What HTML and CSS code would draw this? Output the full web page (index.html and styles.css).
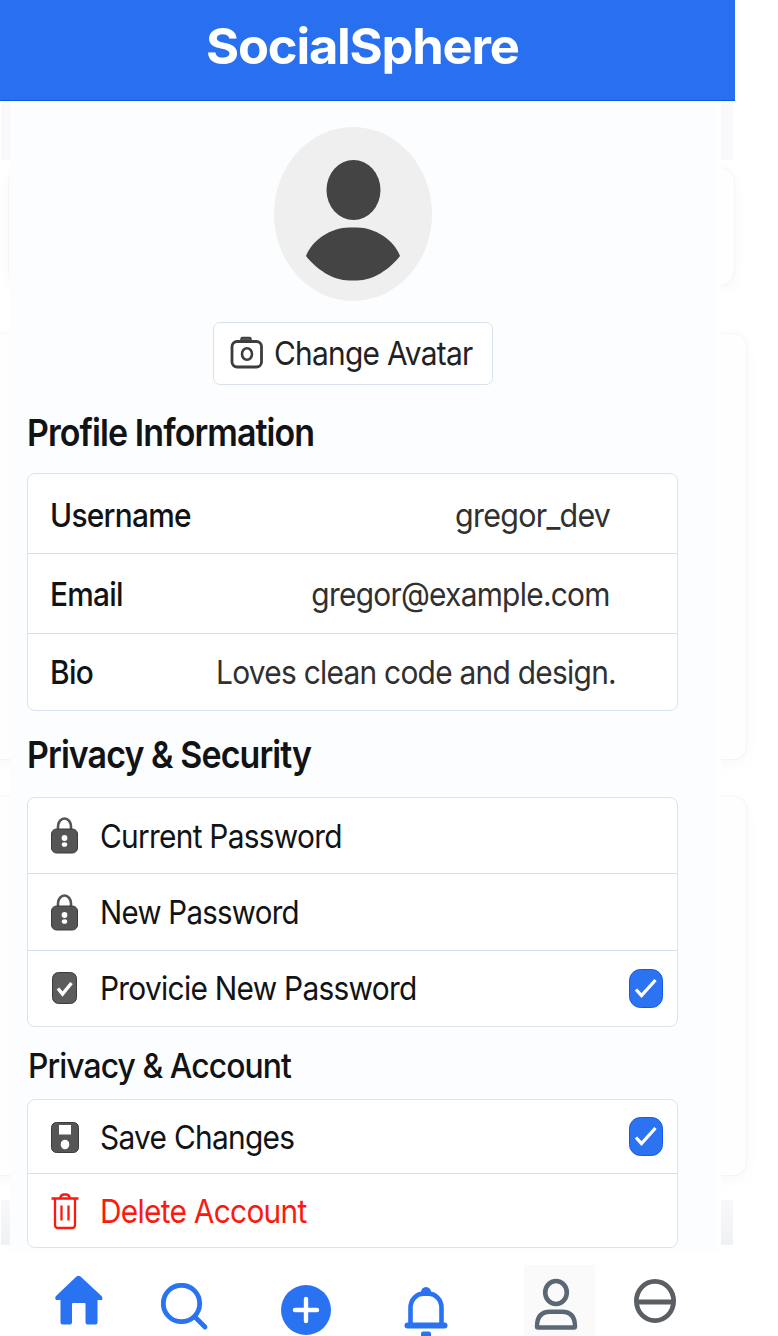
FILE: index.html
```
<!DOCTYPE html>
<html lang="en">
<head>
<meta charset="utf-8">
<title>SocialSphere</title>
<link rel="stylesheet" href="styles.css">
</head>
<body>
<div class="backdrop" aria-hidden="true">
  <div class="strip strip-top"></div>
  <div class="sheet sheet-a"></div>
  <div class="sheet sheet-b"></div>
  <div class="sheet sheet-c"></div>
  <div class="strip strip-bottom"></div>
</div>
<div class="app">
  <header class="topbar"><h1 class="brand">SocialSphere</h1></header>
  <main class="panel">
    <svg class="avatar" viewBox="0 0 158 174" width="158" height="174">
      <ellipse cx="79" cy="87" rx="79" ry="87" fill="#efefef"/>
      <ellipse cx="79.500" cy="63" rx="27" ry="30" fill="#444"/>
      <path d="M32 129C38 113 57 100.500 75 100.500h8C101 100.500 120 113 126 129C116 142 99 153.500 83 153.500h-8C59 153.500 42 142 32 129Z" fill="#444"/>
    </svg>
    <button class="change">
      <svg viewBox="0 0 33 33" width="33" height="33" fill="none" stroke="#3d3d3d">
        <path d="M11 5V3.500Q11 1.500 12.500 1.500h7Q21 1.500 21 3.500V5Z" fill="#555" stroke-width="1.500"/>
        <rect x="2" y="5.500" width="29.500" height="25.500" rx="5" stroke-width="2.800"/>
        <ellipse cx="17" cy="18" rx="5" ry="5.800" stroke-width="2.600"/>
      </svg>
      <span class="t t-change">Change Avatar</span>
    </button>

    <h2 class="heading h-profile"><span class="t t-profile">Profile Information</span></h2>
    <section class="card profile">
      <div class="row row-username"><span class="t key t-username">Username</span><span class="t value t-gregor">gregor_dev</span></div>
      <div class="row row-email"><span class="t key t-email">Email</span><span class="t value t-mail">gregor@example.com</span></div>
      <div class="row"><span class="t key t-bio">Bio</span><span class="t value value-bio t-loves">Loves clean code and design.</span></div>
    </section>

    <h2 class="heading h-security"><span class="t t-security">Privacy &amp; Security</span></h2>
    <section class="card security">
      <div class="row">
        <svg class="icon icon-lock" viewBox="0 0 30 38" width="30" height="38"><path d="M8 14V10.500a6.500 8 0 0 1 13 0V14" fill="none" stroke="#555" stroke-width="2.600"/><rect x="1.500" y="13" width="26" height="24" rx="5" fill="#555" stroke="#3c3c3c"/><circle cx="14.500" cy="22" r="2.900" fill="#fff"/><ellipse cx="14.500" cy="28.500" rx="2.700" ry="2.300" fill="#fff"/></svg>
        <span class="t t-current">Current Password</span>
      </div>
      <div class="row">
        <svg class="icon" viewBox="0 0 30 38" width="30" height="38"><path d="M8 14V10.500a6.500 8 0 0 1 13 0V14" fill="none" stroke="#555" stroke-width="2.600"/><rect x="1.500" y="13" width="26" height="24" rx="5" fill="#555" stroke="#3c3c3c"/><circle cx="14.500" cy="22" r="2.900" fill="#fff"/><ellipse cx="14.500" cy="28.500" rx="2.700" ry="2.300" fill="#fff"/></svg>
        <span class="t t-new">New Password</span>
      </div>
      <div class="row">
        <svg class="icon" viewBox="0 0 30 38" width="30" height="38"><rect x="2.500" y="3.500" width="24" height="31" rx="6" fill="#5c5c5c" stroke="#3c3c3c"/><path d="M8 19.500l4.500 5.500L21.500 14" fill="none" stroke="#fff" stroke-width="3.400"/></svg>
        <span class="t t-provide">Provicie New Password</span>
        <svg class="check" viewBox="0 0 34 39" width="34" height="39"><rect x=".5" y=".5" width="33" height="38" rx="11" fill="#2b73f0" stroke="#1259ee"/><path d="M7 20.500l5.500 6L26.500 11" fill="none" stroke="#fff" stroke-width="3.300"/></svg>
      </div>
    </section>

    <h2 class="heading h-account"><span class="t t-account">Privacy &amp; Account</span></h2>
    <section class="card account">
      <div class="row">
        <svg class="icon" viewBox="0 0 30 38" width="30" height="38"><rect x="1.500" y="4.500" width="27" height="30" rx="5" fill="#555" stroke="#3c3c3c"/><path d="M9 7h12v9.500H9z" fill="#fff"/><ellipse cx="15" cy="26.500" rx="4.300" ry="4.800" fill="#fff"/></svg>
        <span class="t t-save">Save Changes</span>
        <svg class="check" viewBox="0 0 34 39" width="34" height="39"><rect x=".5" y=".5" width="33" height="38" rx="11" fill="#2b73f0" stroke="#1259ee"/><path d="M7 20.500l5.500 6L26.500 11" fill="none" stroke="#fff" stroke-width="3.300"/></svg>
      </div>
      <div class="row danger">
        <svg class="icon" viewBox="0 0 30 38" width="30" height="38" fill="none" stroke="#fb1a10" stroke-width="2.300"><path d="M1.500 6.500h27M10 6q1-3.500 4-3.500h2q3 0 4 3.500M5 7v26q0 3 3 3h14q3 0 3-3V7M11.500 13.500v15M18.500 13.500v15"/></svg>
        <span class="t t-delete">Delete Account</span>
      </div>
    </section>
  </main>
  <nav class="nav">
    <svg class="n-home" viewBox="0 0 48 50" width="48" height="50"><path d="M21.500 1.500Q23.500 0 25.500 1.500L46.500 21Q48 23 47 25H42.500V47.500Q42.500 49.500 40.500 49.500H32.500Q30.500 49.500 30.500 47.500V29Q30.500 28 29.500 28H18Q17 28 17 29V47.500Q17 49.500 15 49.500H7.500Q5.500 49.500 5.500 47.500V25H1Q-.5 23 1 21Z" fill="#2972f2"/></svg>
    <svg class="n-search" viewBox="0 0 48 48" width="48" height="48" fill="none" stroke="#2972f2" stroke-width="4.800"><circle cx="20.500" cy="20.500" r="18.200"/><path d="M34 34L44 44" stroke-linecap="round"/></svg>
    <svg class="n-add" viewBox="0 0 50 50" width="50" height="50"><circle cx="25" cy="25" r="25" fill="#2972f2"/><path d="M14 25h22M25 14v22" stroke="#fff" stroke-width="4.400" stroke-linecap="round"/></svg>
    <svg class="n-bell" viewBox="0 0 44 49" width="44" height="49" fill="none" stroke="#2972f2" stroke-width="4.600"><path d="M6.500 37V21C6.500 12 13 6.800 19 6.800h6C31 6.800 37.500 12 37.500 21V37"/><path d="M16.500 6q1-6 5.500-6t5.500 6z" fill="#2972f2" stroke="none"/><path d="M3.500 38.500h37" stroke-width="6" stroke-linecap="round"/><path d="M17 49v-2.500q0-2 2-2h6q2 0 2 2V49z" fill="#2972f2" stroke="none"/></svg>
    <span class="n-user"><svg viewBox="0 0 44 53" width="44" height="53" fill="none" stroke="#5a6876" stroke-width="4.600"><ellipse cx="22" cy="14.500" rx="10.800" ry="11.500"/><path d="M3 48.500C3 38 8 33.800 16 33.800h12C36 33.800 41 38 41 48.500Q41 49.500 40 49.500H4Q3 49.500 3 48.500Z" stroke-width="4.400"/></svg></span>
    <svg class="n-minus" viewBox="0 0 42 44" width="42" height="44" fill="none" stroke="#5b5e63" stroke-width="4.800"><ellipse cx="21" cy="22" rx="18.600" ry="19.600"/><path d="M3 23h36"/></svg>
  </nav>
</div>
</body>
</html>
```
FILE: styles.css
```
* { box-sizing: border-box; }
body {
  margin: 0;
  width: 778px;
  height: 1336px;
  overflow: hidden;
  position: relative;
  background: #fff;
  font-family: Inter, "Liberation Sans", sans-serif;
  color: #111315;
}
h1, h2 { margin: 0; }
svg { display: block; flex: none; }

/* Sheets showing past the edges of the panel */
.backdrop { position: absolute; inset: 0; overflow: hidden; }
.sheet {
  position: absolute;
  background: #fefefe;
  border-radius: 14px;
  box-shadow: 0 0 2px rgba(0,0,0,.09), 0 3px 16px rgba(0,0,0,.035);
}
.sheet-a { left: 9px; top: 168px; width: 725px; height: 117px; }
.sheet-b { left: -11px; top: 334px; width: 757px; height: 425px; border-radius: 12px; }
.sheet-c { left: -11px; top: 797px; width: 757px; height: 378px; border-radius: 12px; }
.strip { position: absolute; left: 1px; width: 732px; background: #f9f9fb; }
.strip-top { top: 101px; height: 59px; }
.strip-bottom { top: 1200px; height: 45px; background: linear-gradient(#f8f8fa, #f0f1f4); }

.app { position: relative; display: flex; flex-direction: column; }
.topbar {
  width: 735px;
  height: 101px;
  background: #2970f0;
  border-bottom: 1px solid #0b57e8;
  display: flex;
  justify-content: center;
  padding: 16px 10px 0 0;
}
.brand {
  font-size: 50px;
  line-height: 60px;
  font-weight: 700;
  letter-spacing: -1.2px;
  color: #fff;
  white-space: nowrap;
  transform: scaleX(1.013);
}
.panel {
  width: 711px;
  height: 1150px;
  margin-left: 10px;
  padding: 26px 37px 0 17px;
  background: #fcfdff;
  border-right: 5px solid #fefeff;
  display: flex;
  flex-direction: column;
}
.avatar { margin-left: 247px; }
.change {
  width: 280px;
  height: 63px;
  margin: 21px 0 0 186px;
  padding: 0 0 2px 16px;
  border: 1.500px solid #d9e2ec;
  border-radius: 7px;
  background: #fff;
  display: flex;
  align-items: center;
  gap: 11px;
  font: inherit;
  color: #222;
}

/* Condensed interface lettering */
.t {
  display: block;
  white-space: nowrap;
  transform-origin: left center;
  font-size: 33px;
  line-height: 40px;
  letter-spacing: -.8px;
  transform: scaleX(.905);
}
.t-gregor { transform: scaleX(.922); }
.t-new { transform: scaleX(.892); }
.heading { height: 46px; font-weight: 600; }
.heading .t { font-size: 37.500px; line-height: 46px; letter-spacing: -1px; }
.h-profile { margin-top: 25px; }
.h-security { margin-top: 21px; }
.h-account { margin-top: 16px; font-weight: 500; }
.h-account .t { font-size: 34px; padding-left: 1px; transform: scaleX(.937); }

.card {
  width: 651px;
  border: 1.500px solid #dbe4ed;
  border-radius: 8px;
  background: #fff;
  display: flex;
  flex-direction: column;
}
.row {
  flex: 1;
  display: flex;
  align-items: center;
  padding: 0 14px 0 21.500px;
}
.row + .row { border-top: 1.500px solid #d7e0e9; }
.profile { height: 238px; margin-top: 17px; }
.security { height: 230px; margin-top: 19px; }
.account { height: 149px; margin-top: 10px; }
.row .icon { margin-right: 20px; }
.icon-lock { margin-top: -2px; }
.row .check { margin-left: auto; }
.key { font-weight: 500; }
.t-username { font-weight: 550; }
.profile .row { padding-right: 67px; }
.row-username { padding-top: 3px; }
.row-email { padding-top: 2px; }
.value { margin-left: auto; color: #303030; transform-origin: right center; }
.value-bio { margin-right: -6px; }
.danger { color: #fb1a10; }

.nav { height: 85px; display: flex; align-items: flex-start; overflow: hidden; }
.n-home { margin: 24px 0 0 55px; }
.n-search { margin: 32px 0 0 57.500px; }
.n-add { margin: 34px 0 0 72.500px; }
.n-bell { margin: 36px 0 0 72.500px; }
.n-user { margin: 14px 0 0 76px; width: 71px; height: 71px; background: #fafafa; padding: 13px 0 0 10px; }
.n-minus { margin: 28px 0 0 39px; }
```
